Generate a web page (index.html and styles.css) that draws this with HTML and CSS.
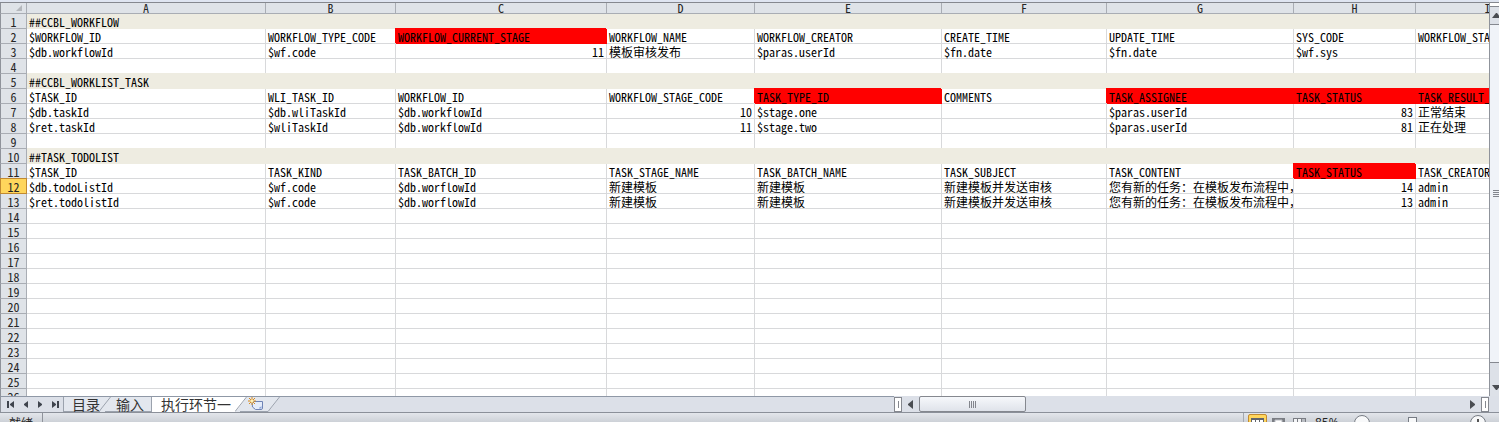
FILE: index.html
```html
<!DOCTYPE html>
<html lang="zh-CN">
<head>
<meta charset="utf-8">
<title>执行环节一</title>
<link rel="stylesheet" href="styles.css">
</head>
<body>
<div class="app">
  <main class="workspace">
    <div class="sheet">
      <table class="grid">
        <colgroup><col class="c-head"><col class="c-a"><col class="c-b"><col class="c-c"><col class="c-d"><col class="c-e"><col class="c-f"><col class="c-g"><col class="c-h"><col class="c-i"></colgroup>
        <thead>
          <tr><th class="corner"><svg class="corner-mark" viewBox="0 0 6 6" aria-hidden="true"><path d="M6 0V6H0Z"/></svg></th><th>A</th><th>B</th><th>C</th><th>D</th><th>E</th><th>F</th><th>G</th><th>H</th><th>I</th></tr>
        </thead>
        <tbody>
          <tr><th>1</th><td class="band" colspan="9">##CCBL_WORKFLOW</td></tr>
          <tr><th>2</th><td>$WORKFLOW_ID</td><td>WORKFLOW_TYPE_CODE</td><td class="red">WORKFLOW_CURRENT_STAGE</td><td>WORKFLOW_NAME</td><td>WORKFLOW_CREATOR</td><td>CREATE_TIME</td><td>UPDATE_TIME</td><td>SYS_CODE</td><td>WORKFLOW_STATUS</td></tr>
          <tr><th>3</th><td>$db.workflowId</td><td>$wf.code</td><td class="num">11</td><td>模板审核发布</td><td>$paras.userId</td><td>$fn.date</td><td>$fn.date</td><td>$wf.sys</td><td></td></tr>
          <tr><th>4</th><td></td><td></td><td></td><td></td><td></td><td></td><td></td><td></td><td></td></tr>
          <tr><th>5</th><td class="band" colspan="9">##CCBL_WORKLIST_TASK</td></tr>
          <tr><th>6</th><td>$TASK_ID</td><td>WLI_TASK_ID</td><td>WORKFLOW_ID</td><td>WORKFLOW_STAGE_CODE</td><td class="red">TASK_TYPE_ID</td><td>COMMENTS</td><td class="red">TASK_ASSIGNEE</td><td class="red">TASK_STATUS</td><td class="red">TASK_RESULT_CODE</td></tr>
          <tr><th>7</th><td>$db.taskId</td><td>$db.wliTaskId</td><td>$db.workflowId</td><td class="num">10</td><td>$stage.one</td><td></td><td>$paras.userId</td><td class="num">83</td><td>正常结束</td></tr>
          <tr><th>8</th><td>$ret.taskId</td><td>$wliTaskId</td><td>$db.workflowId</td><td class="num">11</td><td>$stage.two</td><td></td><td>$paras.userId</td><td class="num">81</td><td>正在处理</td></tr>
          <tr><th>9</th><td></td><td></td><td></td><td></td><td></td><td></td><td></td><td></td><td></td></tr>
          <tr><th>10</th><td class="band" colspan="9">##TASK_TODOLIST</td></tr>
          <tr><th>11</th><td>$TASK_ID</td><td>TASK_KIND</td><td>TASK_BATCH_ID</td><td>TASK_STAGE_NAME</td><td>TASK_BATCH_NAME</td><td>TASK_SUBJECT</td><td>TASK_CONTENT</td><td class="red">TASK_STATUS</td><td>TASK_CREATOR</td></tr>
          <tr><th class="current">12</th><td>$db.todoListId</td><td>$wf.code</td><td>$db.worflowId</td><td>新建模板</td><td>新建模板</td><td>新建模板并发送审核</td><td class="clip">您有新的任务：在模板发布流程中，</td><td class="num">14</td><td>admin</td></tr>
          <tr><th>13</th><td>$ret.todolistId</td><td>$wf.code</td><td>$db.worflowId</td><td>新建模板</td><td>新建模板</td><td>新建模板并发送审核</td><td class="clip">您有新的任务：在模板发布流程中，</td><td class="num">13</td><td>admin</td></tr>
          <tr><th>14</th><td></td><td></td><td></td><td></td><td></td><td></td><td></td><td></td><td></td></tr>
          <tr><th>15</th><td></td><td></td><td></td><td></td><td></td><td></td><td></td><td></td><td></td></tr>
          <tr><th>16</th><td></td><td></td><td></td><td></td><td></td><td></td><td></td><td></td><td></td></tr>
          <tr><th>17</th><td></td><td></td><td></td><td></td><td></td><td></td><td></td><td></td><td></td></tr>
          <tr><th>18</th><td></td><td></td><td></td><td></td><td></td><td></td><td></td><td></td><td></td></tr>
          <tr><th>19</th><td></td><td></td><td></td><td></td><td></td><td></td><td></td><td></td><td></td></tr>
          <tr><th>20</th><td></td><td></td><td></td><td></td><td></td><td></td><td></td><td></td><td></td></tr>
          <tr><th>21</th><td></td><td></td><td></td><td></td><td></td><td></td><td></td><td></td><td></td></tr>
          <tr><th>22</th><td></td><td></td><td></td><td></td><td></td><td></td><td></td><td></td><td></td></tr>
          <tr><th>23</th><td></td><td></td><td></td><td></td><td></td><td></td><td></td><td></td><td></td></tr>
          <tr><th>24</th><td></td><td></td><td></td><td></td><td></td><td></td><td></td><td></td><td></td></tr>
          <tr><th>25</th><td></td><td></td><td></td><td></td><td></td><td></td><td></td><td></td><td></td></tr>
          <tr><th>26</th><td></td><td></td><td></td><td></td><td></td><td></td><td></td><td></td><td></td></tr>
        </tbody>
      </table>
    </div>
    <div class="vscroll">
      <span class="vsplit"></span>
      <button class="arrow" aria-label="向上滚动"><svg width="9" height="5" viewBox="0 0 9 5"><path d="M0 5L4 0H5L9 5Z"/></svg></button>
      <div class="vthumb"><svg width="8" height="8" viewBox="0 0 8 8" aria-hidden="true"><path d="M1 0h7v1H1zM1 2h7v1H1zM1 4h7v1H1zM1 6h7v1H1z"/></svg></div>
      <button class="arrow" aria-label="向下滚动"><svg width="9" height="5" viewBox="0 0 9 5"><path d="M0 0H9L5 5H4Z"/></svg></button>
    </div>
  </main>

  <div class="tabbar">
    <nav class="tabs">
      <div class="tabnav">
        <button aria-label="第一张"><svg width="8" height="7" viewBox="0 0 8 7"><path d="M0 0h2v7H0zM7 0v7L3 4V3z"/></svg></button>
        <button aria-label="上一张"><svg width="8" height="7" viewBox="0 0 8 7"><path d="M6 0v7L2 4V3z"/></svg></button>
        <button aria-label="下一张"><svg width="8" height="7" viewBox="0 0 8 7"><path d="M1 0v7l4-3V3z"/></svg></button>
        <button aria-label="最后一张"><svg width="8" height="7" viewBox="0 0 8 7"><path d="M5 0h2v7H5zM0 0v7l4-3V3z"/></svg></button>
      </div>
      <button class="tab">目录</button>
      <svg class="slant" width="11" height="15" viewBox="0 0 11 15" aria-hidden="true"><path class="fill" d="M0 0h11v15H0z"/><path class="edge" d="M10.500 0L1 12Q0 14.500-2 14.500M5 14.500H11"/></svg>
      <button class="tab second">输入</button>
      <button class="tab active">执行环节一</button>
      <svg class="slant" width="12" height="15" viewBox="0 0 12 15" aria-hidden="true"><path class="fill" d="M0 0h12v15H0z"/><path class="paper" d="M0 0h12L2 13 0 15z"/><path class="edge" d="M11.500 0L2 12Q1 14.500-1 14.500M5 14.500H12"/></svg>
      <button class="tab insert" aria-label="插入工作表"><svg width="16" height="14" viewBox="0 0 16 14"><path d="M4 4.500h10.500V11q0 1.500-1.500 1.500H7.500L4.500 10z" fill="#e4ecfa" stroke="#6e83b5"/><path d="M14.500 9.500l-3 3V10z" fill="#8fa5d8"/><path d="M4 0v8M0 4h8M1 1l6 6M7 1L1 7" stroke="#d98a1b"/><circle cx="4" cy="4" r="1.500" fill="#fff3b8"/></svg></button>
      <svg class="slant" width="12" height="15" viewBox="0 0 12 15" aria-hidden="true"><path class="fill" d="M0 0h12L2 13 0 15z"/><path class="edge" d="M11.500 0L2 12Q1 14.500-1 14.500"/></svg>
    </nav>
    <div class="hscroll">
      <span class="hsplit"></span>
      <button class="arrow" aria-label="向左滚动"><svg width="5" height="9" viewBox="0 0 5 9"><path d="M5 0V9L0 5V4Z"/></svg></button>
      <div class="htrack"><div class="hthumb"><svg width="8" height="7" viewBox="0 0 8 7" aria-hidden="true"><path d="M0 0h1v7H0zM2 0h1v7H2zM4 0h1v7H4zM6 0h1v7H6z"/></svg></div></div>
      <button class="arrow" aria-label="向右滚动"><svg width="5" height="9" viewBox="0 0 5 9"><path d="M0 0V9L5 5V4Z"/></svg></button>
      <span class="hsplit"></span>
    </div>
  </div>

  <footer class="status">
    <span class="ready">就绪</span>
    <div class="views">
      <button class="view selected" aria-label="普通"><svg width="13" height="12" viewBox="0 0 13 12"><path d="M0 0h13v12H0z" fill="#62656b"/><path d="M1 2h3v2H1zM5 2h3v2H5zM9 2h3v2H9zM1 5h3v2H1zM5 5h3v2H5zM9 5h3v2H9z" fill="#fff"/></svg></button>
      <button class="view" aria-label="页面布局"><svg width="13" height="12" viewBox="0 0 13 12"><path d="M0 0h13v12H0z" fill="#7a7d83"/><path d="M3 2h7v9H3z" fill="#fff" stroke="#b9bcc2"/><path d="M5 4h3v1H5z" fill="#7a7d83"/></svg></button>
      <button class="view" aria-label="分页预览"><svg width="13" height="12" viewBox="0 0 13 12"><path d="M0 0h13v12H0z" fill="#7a7d83"/><path d="M1 1h3v9H1zM5 1h3v5H5z" fill="#f4f5f7"/><path d="M9 1h3v9H9z" fill="#b9bcc2"/></svg></button>
    </div>
    <label class="percent" for="zoom">85%</label>
    <button class="round" aria-label="缩小"><svg width="16" height="16" viewBox="0 0 16 16"><circle cx="8" cy="8" r="7.500" fill="#f8f9fa" stroke="#777c84"/><path d="M4 8h8" stroke="#555" stroke-width="2"/></svg></button>
    <input class="zoom" id="zoom" type="range" min="0" max="100" value="42">
    <button class="round" aria-label="放大"><svg width="16" height="16" viewBox="0 0 16 16"><circle cx="8" cy="8" r="7.500" fill="#f8f9fa" stroke="#777c84"/><path d="M4 8h8M8 4v8" stroke="#555" stroke-width="2"/></svg></button>
  </footer>
</div>
</body>
</html>
```
FILE: styles.css
```css
* { box-sizing: border-box; }

body {
  margin: 0;
  background: #dfe3e8;
  font-family: "Noto Sans Mono CJK SC", "Liberation Mono", "Noto Sans CJK SC", monospace;
  font-size: 12px;
  color: #000;
}

button {
  margin: 0;
  padding: 0;
  border: 0;
  background: none;
  font: inherit;
  color: inherit;
}

svg { display: block; flex: none; }

.app {
  display: flex;
  flex-direction: column;
  height: 100vh;
  overflow: hidden;
}

/* Worksheet */
.workspace {
  flex: 1;
  min-height: 0;
  display: flex;
  border-top: 2px solid #dfe5f1;
}

.sheet {
  flex: 1;
  min-width: 0;
  overflow: hidden;
  background: #fff;
  border-top: 1px solid #85888f;
}

.grid {
  width: 1560px;
  table-layout: fixed;
  border-collapse: separate;
  border-spacing: 0;
}

.c-head { width: 27px; }
.c-a { width: 239px; }
.c-b { width: 130px; }
.c-c { width: 211px; }
.c-d { width: 148px; }
.c-e, .c-g { width: 187px; }
.c-f { width: 165px; }
.c-h { width: 122px; }
.c-i { width: 144px; }

.grid td,
.grid th {
  height: 15px;
  padding: 2px 2px 0;
  border-right: 1px solid #d8d9db;
  border-bottom: 1px solid #d8d9db;
  font-weight: 400;
  line-height: 12px;
  white-space: nowrap;
}

.grid th {
  padding: 2px 0 0;
  background: #dfe3e8;
  border-color: #a9adb4;
  color: #262626;
  text-align: center;
}

.grid thead th { height: 11px; padding: 0; line-height: 10px; }
.grid th:first-child { border-left: 1px solid #8f939b; }
.grid th.current { background: #ffd65c; border-color: #c28a30; box-shadow: 0 -1px #c28a30; }

.corner-mark { width: 6px; height: 6px; margin-left: 15px; fill: #b4b7bc; }

.grid .num { text-align: right; }
.grid .clip { overflow: hidden; }
.grid .band { background: #eeece1; border-color: #eeece1; box-shadow: 0 -1px #eeece1; }
.grid .red { background: #f00; border-color: #f00; box-shadow: -1px -1px #f00; }
.grid thead + tbody tr:first-child .band { box-shadow: none; }

/* Scroll bars */
.arrow svg { fill: #4a4d52; }

.vscroll {
  flex: 0 0 10px;
  display: flex;
  flex-direction: column;
  overflow: hidden;
  border-left: 1px solid #8f939b;
  border-top: 1px solid #85888f;
  background: #dde1e8;
}

.vsplit { flex: 0 0 4px; background: #fff; border-bottom: 1px solid #85888f; }

.vscroll .arrow {
  flex: 0 0 17px;
  display: flex;
  align-items: center;
  padding-left: 2px;
}

.vthumb {
  flex: 1;
  margin-bottom: 16px;
  display: flex;
  align-items: center;
  padding-left: 2px;
  border: solid #85888f;
  border-width: 1px 0;
  background: #f0f3f8;
}

.vthumb svg, .hthumb svg { fill: #83868d; }

.tabbar {
  flex: 0 0 16px;
  display: grid;
  grid-template-columns: minmax(0, 1fr) 605px;
  background: #dce0e8;
}

.tabs { display: flex; border-top: 1px solid #8f98a6; border-left: 1px solid #8f939b; }

.tabnav {
  flex: 0 0 63px;
  display: flex;
  align-items: center;
  gap: 7px;
  padding-left: 6px;
  border-right: 1px solid #9ba2ad;
}

.tabnav svg { fill: #3f444d; }

.tab {
  padding-left: 8px;
  background: #e3e7ee;
  color: #333;
  font-family: "Noto Sans CJK SC", sans-serif;
  font-size: 14px;
  line-height: 14px;
  white-space: nowrap;
  border-bottom: 1px solid #9ba2ad;
}

.tab.second { padding: 0 7px 0 5px; border-right: 1px solid #9ba2ad; }
.tab.active { padding: 0 4px 0 9px; background: #fff; border-color: #fff; }
.tab.insert { display: flex; align-items: center; padding: 0 4px 0 1px; }

.slant .fill { fill: #e3e7ee; }
.slant .paper { fill: #fff; }
.slant .edge { fill: none; stroke: #9ba2ad; }

.hscroll { display: flex; }

.hsplit {
  flex: 0 0 8px;
  margin-top: 1px;
  display: flex;
  justify-content: center;
  padding: 3px 0;
  background: #fff;
  border: 1px solid #85888f;
}

.hsplit::after { content: ""; width: 1px; background: #85888f; }
.hscroll .arrow { flex: 0 0 17px; display: flex; align-items: center; justify-content: center; }
.hscroll .hsplit:last-child { margin-right: 10px; }
.htrack { flex: 1; }

.hthumb {
  width: 107px;
  height: 16px;
  display: flex;
  align-items: center;
  justify-content: center;
  border: 1px solid #85888f;
  border-radius: 2px;
  background: linear-gradient(#f6f8fb, #dfe3ea);
}

/* Status bar */
.status {
  flex: 0 0 10px;
  display: flex;
  align-items: flex-start;
  padding-right: 13px;
  overflow: hidden;
  border-top: 1px solid #8b9099;
  background: linear-gradient(#e3e6eb, #cdd1d7);
}

.ready {
  width: 43px;
  padding: 2px 0 0 9px;
  line-height: 16px;
  border-right: 1px solid #8f939b;
  color: #222;
}

.views { display: flex; gap: 2px; margin-left: auto; padding-left: 4px; border-left: 1px solid #a5a9b0; }
.view { width: 19px; height: 18px; padding: 4px 3px; margin-top: 1px; }
.view.selected { padding: 3px 2px; border: 1px solid #c28a30; border-radius: 2px; background: #ffd65c; }

.percent {
  width: 45px;
  padding: 2px 0 0 6px;
  font-family: "Open Sans", sans-serif;
  line-height: 16px;
  color: #222;
}

.round { margin-top: 2px; }

.zoom {
  width: 100px;
  height: 20px;
  margin: 2px 0 0;
  appearance: none;
  background: none;
}

.zoom::-webkit-slider-thumb {
  appearance: none;
  width: 9px;
  height: 16px;
  border: 1px solid #777c84;
  background: #f8f9fa;
}
```
